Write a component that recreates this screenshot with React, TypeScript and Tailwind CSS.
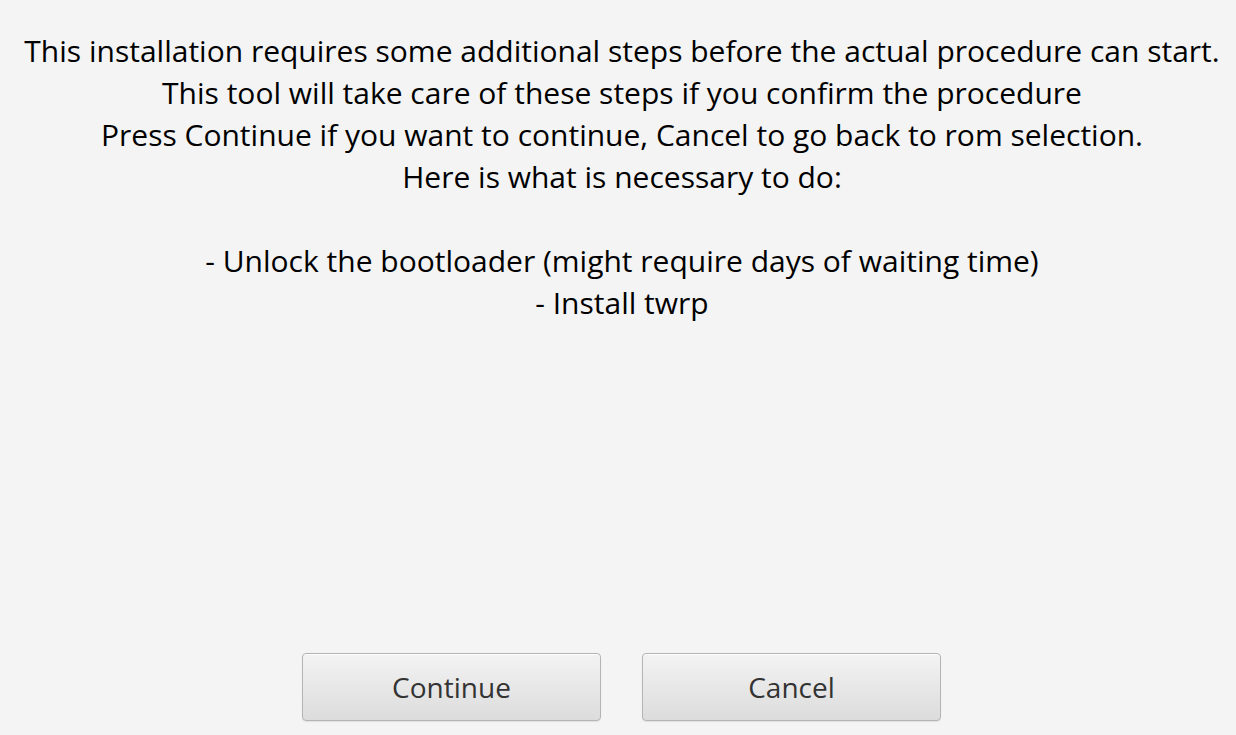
const lines = [
  'This installation requires some additional steps before the actual procedure can start.',
  'This tool will take care of these steps if you confirm the procedure',
  'Press Continue if you want to continue, Cancel to go back to rom selection.',
  'Here is what is necessary to do:',
  '',
  '- Unlock the bootloader (might require days of waiting time)',
  '- Install twrp',
];

function Button({ label }: { label: string }) {
  return (
    <button className="w-[299px] h-[68px] rounded-[4px] border border-[#b4b4b4] bg-gradient-to-b from-[#f3f3f3] to-[#dcdcdc] shadow-[inset_0_1px_0_#ffffff,0_1px_1px_rgba(0,0,0,0.08)] text-[28px] text-[#333333]">
      {label}
    </button>
  );
}

export default function App() {
  return (
    <div className="flex flex-col h-[735px] w-full bg-[#f4f4f4] font-['Open_Sans',sans-serif]">
      <div className="pt-[30px] pl-[8px] text-center text-[30px] leading-[42px] text-black">
        {lines.map((l, i) => (
          <div key={i} className="h-[42px] whitespace-nowrap">{l}</div>
        ))}
      </div>
      <div className="flex-1" />
      <div className="flex justify-center gap-[41px] pl-[7px] mb-[14px]">
        <Button label="Continue" />
        <Button label="Cancel" />
      </div>
    </div>
  );
}
